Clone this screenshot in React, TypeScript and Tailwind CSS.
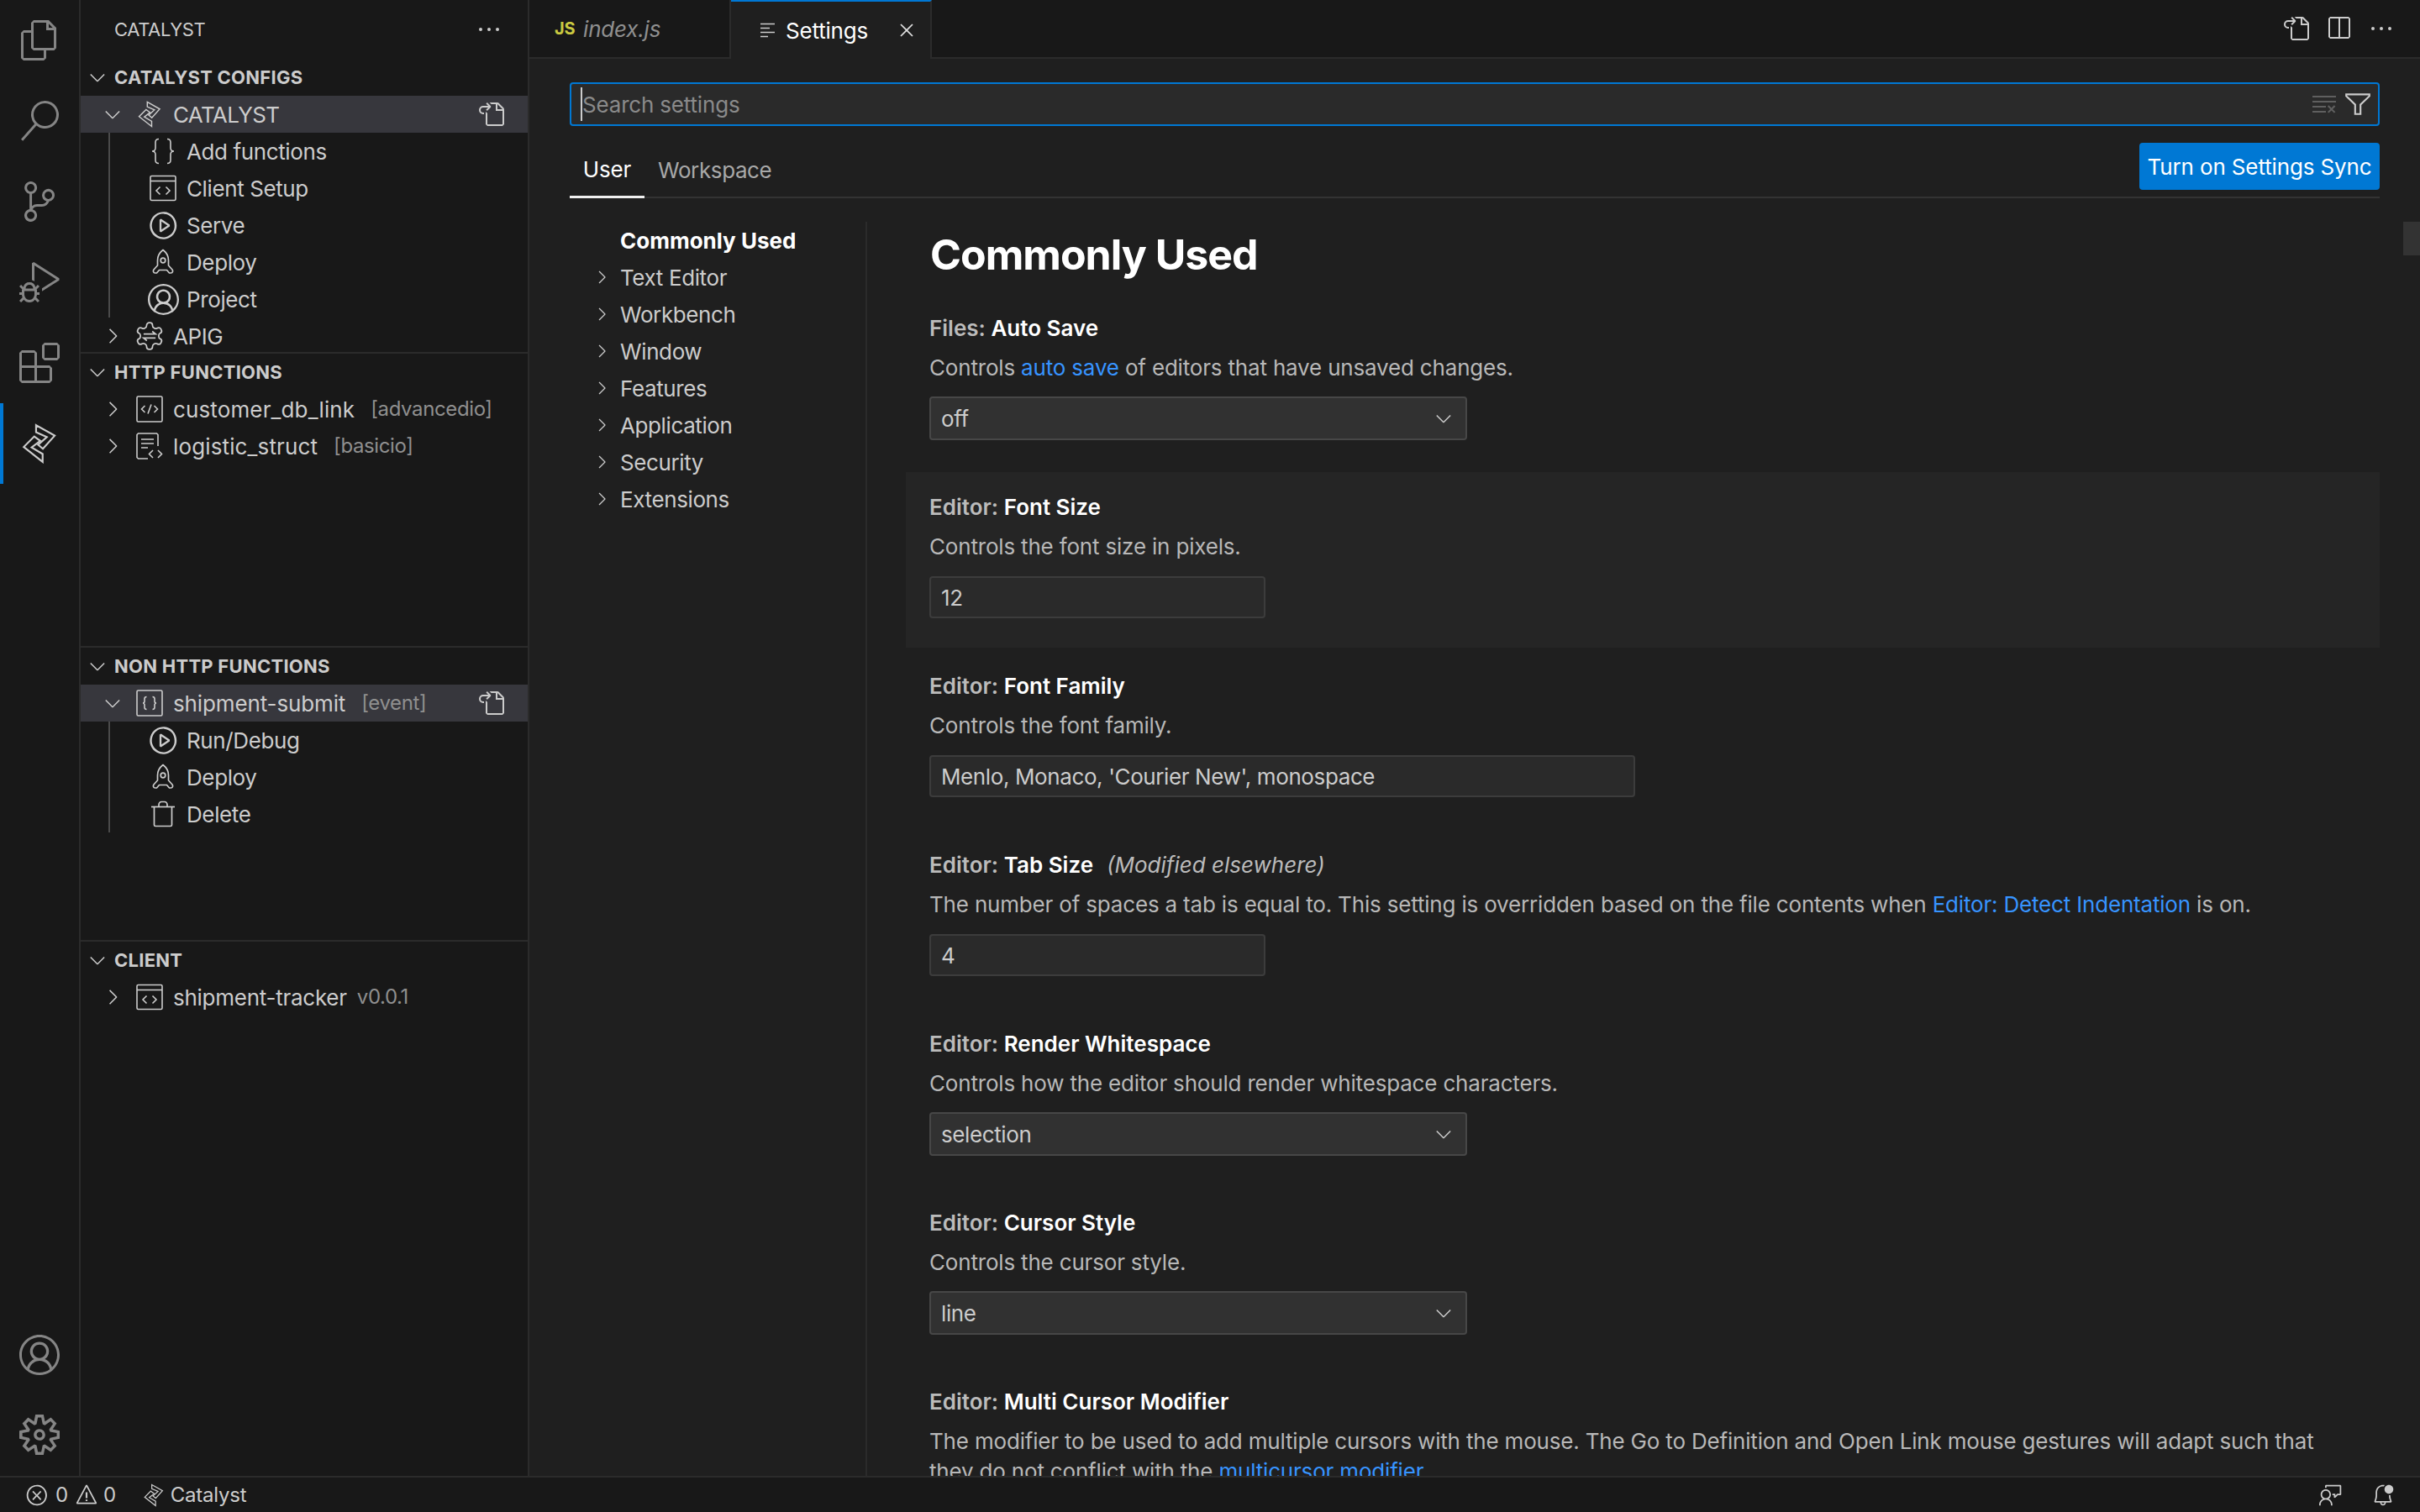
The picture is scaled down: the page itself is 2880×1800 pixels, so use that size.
import type { ReactNode } from 'react';
import {
  VscAccount,
  VscBellDot,
  VscChevronDown,
  VscChevronRight,
  VscClearAll,
  VscClose,
  VscDebugAlt,
  VscEllipsis,
  VscError,
  VscExtensions,
  VscFeedback,
  VscFiles,
  VscFilter,
  VscGoToFile,
  VscPlayCircle,
  VscSearch,
  VscSettingsGear,
  VscSourceControl,
  VscSplitHorizontal,
  VscWarning,
} from 'react-icons/vsc';

function CatalystLogo({ className }: { className?: string }) {
  return (
    <svg viewBox="18 38 134 154" fill="none" stroke="currentColor" strokeWidth="7" strokeLinejoin="miter" className={className}>
      <path d="M72 45 L143 85 L98 135 L80 120 L113 90 L72 72 Z" />
      <path d="M97 185 L25 128 L65 88 L88 105 L55 130 L97 155 Z" />
    </svg>
  );
}

function Braces({ className }: { className?: string }) {
  return (
    <svg viewBox="0 0 32 32" fill="none" stroke="currentColor" strokeWidth="1.6" className={className}>
      <path d="M11 1.500c-3 0-4 1.500-4 4v6.500c0 2-1 4-4 4 3 0 4 2 4 4v6.500c0 2.500 1 4 4 4M21 1.500c3 0 4 1.500 4 4v6.500c0 2 1 4 4 4-3 0-4 2-4 4v6.500c0 2.500-1 4-4 4" />
    </svg>
  );
}

function Rocket({ className }: { className?: string }) {
  return (
    <svg viewBox="0 0 32 32" fill="none" stroke="currentColor" strokeWidth="1.7" strokeLinejoin="round" className={className}>
      <path d="M16 1.500c4.500 3.500 6.500 7.500 6.500 12.500v6l4.500 5c1.200 1.500.5 4-1.500 4h-2l-3-3.500h-9L8.500 29h-2c-2 0-2.700-2.500-1.500-4l4.500-5v-6c0-5 2-9 6.500-12.500z" />
      <circle cx="16" cy="14" r="2.800" />
    </svg>
  );
}

function Trash({ className }: { className?: string }) {
  return (
    <svg viewBox="0 0 32 32" fill="none" stroke="currentColor" strokeWidth="1.7" strokeLinejoin="round" className={className}>
      <path d="M2 7.500h28" />
      <path d="M5.500 7.500V29c0 1 .5 1.500 1.500 1.500h18c1 0 1.500-.5 1.500-1.500V7.500" />
      <path d="M11 7.500V5c0-2 1.500-3.500 3-3.500h4c1.500 0 3 1.500 3 3.500v2.500" />
    </svg>
  );
}

function TabSettingsIcon({ className }: { className?: string }) {
  return (
    <svg viewBox="0 0 18 18" fill="none" stroke="currentColor" strokeWidth="1.700" className={className}>
      <path d="M0 1.500h17M0 6.500h11M0 11.500h17M0 16.500h9" />
    </svg>
  );
}

function WindowCode({ className }: { className?: string }) {
  return (
    <svg viewBox="0 0 32 32" fill="none" stroke="currentColor" strokeWidth="1.6" className={className}>
      <rect x="1" y="1.500" width="30" height="29" rx="1.500" />
      <path d="M1 7.500h30" />
      <path d="M12.500 14.500 8 19l4.500 4.500M19.500 14.500 24 19l-4.500 4.500" />
    </svg>
  );
}

function SquareCode({ className }: { className?: string }) {
  return (
    <svg viewBox="0 0 32 32" fill="none" stroke="currentColor" strokeWidth="1.6" className={className}>
      <rect x="1" y="1" width="30" height="30" rx="1.500" />
      <path d="M10.500 12 6.500 16l4 4M21.500 12l4 4-4 4M18 10.500 14 21.500" />
    </svg>
  );
}

function SquareBraces({ className }: { className?: string }) {
  return (
    <svg viewBox="0 0 32 32" fill="none" stroke="currentColor" strokeWidth="1.6" className={className}>
      <rect x="1" y="1" width="30" height="30" rx="1.500" />
      <path d="M12.500 8.500c-2 0-2.500 1-2.500 2.500v2.500c0 1.500-.5 2.500-2 2.500 1.500 0 2 1 2 2.500V21c0 1.500.5 2.500 2.500 2.500M19.500 8.500c2 0 2.500 1 2.500 2.500v2.500c0 1.500.5 2.500 2 2.500-1.500 0-2 1-2 2.500V21c0 1.500-.5 2.500-2.500 2.500" />
    </svg>
  );
}

function DocCode({ className }: { className?: string }) {
  return (
    <svg viewBox="0 0 32 32" fill="none" stroke="currentColor" strokeWidth="1.6" className={className}>
      <path d="M14 31H2.500L1 29.500v-27L2.500 1h22L26 2.500V16" />
      <path d="M6 8h15M6 13h15M6 18h8" />
      <path d="M20 21l-4.500 4.500L20 30M26 21l4.500 4.500L26 30" />
    </svg>
  );
}

function GearArrows({ className }: { className?: string }) {
  return (
    <svg viewBox="0 0 24 24" fill="none" stroke="currentColor" strokeWidth="1.100" className={className}>
      <path d="M12.220 2h-.44a2 2 0 0 0-2 2v.18a2 2 0 0 1-1 1.730l-.43.25a2 2 0 0 1-2 0l-.15-.08a2 2 0 0 0-2.730.73l-.22.38a2 2 0 0 0 .73 2.730l.15.1a2 2 0 0 1 1 1.720v.51a2 2 0 0 1-1 1.740l-.15.09a2 2 0 0 0-.73 2.730l.22.38a2 2 0 0 0 2.730.73l.15-.08a2 2 0 0 1 2 0l.43.25a2 2 0 0 1 1 1.730V20a2 2 0 0 0 2 2h.44a2 2 0 0 0 2-2v-.18a2 2 0 0 1 1-1.730l.43-.25a2 2 0 0 1 2 0l.15.08a2 2 0 0 0 2.730-.73l.22-.39a2 2 0 0 0-.73-2.730l-.15-.08a2 2 0 0 1-1-1.740v-.5a2 2 0 0 1 1-1.740l.15-.09a2 2 0 0 0 .73-2.730l-.22-.38a2 2 0 0 0-2.730-.73l-.15.08a2 2 0 0 1-2 0l-.43-.25a2 2 0 0 1-1-1.730V4a2 2 0 0 0-2-2z" />
      <path d="M7.500 10.500h9l-2.500-2M16.500 13.500h-9l2.500 2" />
    </svg>
  );
}

function ActivityItem({ children, active }: { children: ReactNode; active?: boolean }) {
  return (
    <div className={`h-[96px] flex items-center justify-center ${active ? 'border-l-4 border-[#0078d4] text-[#cccccc] pr-[4px]' : ''}`}>
      {children}
    </div>
  );
}

function SectionHeader({ label }: { label: string }) {
  return (
    <div className="h-[44px] flex items-center pl-[6px] shrink-0">
      <VscChevronDown className="w-[28px] h-[28px]" />
      <span className="ml-[6px] text-[22px] font-bold tracking-[0.012em]">{label}</span>
    </div>
  );
}

interface TreeRowProps {
  open?: boolean;
  selected?: boolean;
  icon: ReactNode;
  label: string;
  labelClass?: string;
  hint?: string;
}

function TreeRow({ open, selected, icon, label, labelClass, hint }: TreeRowProps) {
  return (
    <div className={`h-[44px] flex items-center pl-[24px] pr-[28px] ${selected ? 'bg-[#37373d]' : ''}`}>
      {open ? <VscChevronDown className="w-[28px] h-[28px]" /> : <VscChevronRight className="w-[28px] h-[28px]" />}
      <span className="ml-[14px] w-[32px] h-[32px] flex items-center justify-center shrink-0">{icon}</span>
      <span className={`ml-[12px] whitespace-nowrap ${labelClass ?? ''}`}>{label}</span>
      {hint && <span className="ml-[19px] text-[24px] text-[#8f8f8f] whitespace-nowrap">{hint}</span>}
      {selected && <VscGoToFile className="ml-auto w-[32px] h-[32px] shrink-0" />}
    </div>
  );
}

function ChildRow({ icon, label }: { icon: ReactNode; label: string }) {
  return (
    <div className="h-[44px] flex items-center pl-[47px]">
      <span className="w-[32px] h-[32px] flex items-center justify-center shrink-0">{icon}</span>
      <span className="ml-[12px]">{label}</span>
    </div>
  );
}

function Sidebar() {
  return (
    <aside className="w-[534px] shrink-0 bg-[#181818] border-r-2 border-[#2b2b2b] flex flex-col text-[#cccccc] text-[26px] tracking-[-0.015em]">
      <div className="h-[70px] flex items-center justify-between pl-[40px] pr-[30px] shrink-0">
        <span className="text-[22px] font-normal">CATALYST</span>
        <VscEllipsis className="w-[32px] h-[32px]" />
      </div>

      <section className="h-[351px] border-b-2 border-[#2b2b2b] shrink-0">
        <SectionHeader label="CATALYST CONFIGS" />
        <TreeRow open selected icon={<CatalystLogo className="w-[28px] h-[32px]" />} label="CATALYST" labelClass="tracking-[-0.025em]" />
        <div className="ml-[33px] border-l-2 border-[#4a4a4a]">
          <ChildRow icon={<Braces className="w-[32px] h-[32px]" />} label="Add functions" />
          <ChildRow icon={<WindowCode className="w-[32px] h-[32px]" />} label="Client Setup" />
          <ChildRow icon={<VscPlayCircle className="w-[37px] h-[37px] shrink-0" />} label="Serve" />
          <ChildRow icon={<Rocket className="w-[32px] h-[32px]" />} label="Deploy" />
          <ChildRow icon={<VscAccount className="w-[37px] h-[37px] shrink-0" />} label="Project" />
        </div>
        <TreeRow icon={<GearArrows className="w-[38px] h-[38px] shrink-0" />} label="APIG" />
      </section>

      <section className="h-[350px] border-b-2 border-[#2b2b2b] shrink-0">
        <SectionHeader label="HTTP FUNCTIONS" />
        <TreeRow icon={<SquareCode className="w-[32px] h-[32px]" />} label="customer_db_link" labelClass="tracking-[0.005em]" hint="[advancedio]" />
        <TreeRow icon={<DocCode className="w-[32px] h-[32px]" />} label="logistic_struct" labelClass="tracking-[0.005em]" hint="[basicio]" />
      </section>

      <section className="h-[350px] border-b-2 border-[#2b2b2b] shrink-0">
        <SectionHeader label="NON HTTP FUNCTIONS" />
        <TreeRow open selected icon={<SquareBraces className="w-[32px] h-[32px]" />} label="shipment-submit" labelClass="tracking-[-0.005em]" hint="[event]" />
        <div className="ml-[33px] border-l-2 border-[#4a4a4a]">
          <ChildRow icon={<VscPlayCircle className="w-[37px] h-[37px] shrink-0" />} label="Run/Debug" />
          <ChildRow icon={<Rocket className="w-[32px] h-[32px]" />} label="Deploy" />
          <ChildRow icon={<Trash className="w-[32px] h-[32px]" />} label="Delete" />
        </div>
      </section>

      <section className="flex-1">
        <SectionHeader label="CLIENT" />
        <div className="h-[44px] flex items-center pl-[24px]">
          <VscChevronRight className="w-[28px] h-[28px]" />
          <span className="ml-[14px] w-[32px] h-[32px] flex items-center justify-center shrink-0">
            <WindowCode className="w-[32px] h-[32px]" />
          </span>
          <span className="ml-[12px] tracking-[-0.01em]">shipment-tracker</span>
          <span className="ml-[12px] text-[24px] text-[#8f8f8f]">v0.0.1</span>
        </div>
      </section>
    </aside>
  );
}

function SelectBox({ value }: { value: string }) {
  return (
    <div className="mt-[16px] w-[640px] h-[52px] flex items-center justify-between pl-[12px] pr-[12px] bg-[#313131] border-2 border-[#474747] rounded-[4px] text-[#cccccc] tracking-[-0.015em]">
      <span>{value}</span>
      <VscChevronDown className="w-[28px] h-[28px]" />
    </div>
  );
}

function InputBox({ value, width }: { value: string; width: string }) {
  return (
    <div className={`mt-[17px] h-[50px] flex items-center pl-[12px] bg-[#2a2a2a] border-2 border-[#3c3c3c] rounded-[4px] text-[#cccccc] tracking-[-0.015em] ${width}`}>
      {value}
    </div>
  );
}

interface SettingRowProps {
  scope: string;
  name: string;
  note?: string;
  hover?: boolean;
  children: ReactNode;
}

function SettingRow({ scope, name, note, hover, children }: SettingRowProps) {
  return (
    <div className={`h-[209px] mb-[4px] px-[28px] pt-[24px] ${hover ? 'bg-[#252525]' : ''}`}>
      <div className="h-[36px] leading-[36px] font-semibold text-[#bbbbbb] whitespace-nowrap tracking-[0em]">
        {scope}: <span className="text-white">{name}</span>
        {note && <span className="ml-[16px] font-normal italic text-[#bbbbbb]">{note}</span>}
      </div>
      {children}
    </div>
  );
}

function Desc({ children }: { children: ReactNode }) {
  return <p className="mt-[11px] leading-[36px] text-[#b8b8b8] whitespace-nowrap">{children}</p>;
}

function A({ children }: { children: ReactNode }) {
  return <span className="text-[#3794ff]">{children}</span>;
}

const tocItems = ['Text Editor', 'Workbench', 'Window', 'Features', 'Application', 'Security', 'Extensions'];

function SettingsPane() {
  return (
    <main className="flex-1 min-w-0 bg-[#1f1f1f] flex flex-col overflow-hidden text-[26px] tracking-[-0.007em] relative">
      <div className="h-[70px] shrink-0 flex bg-[#181818] border-b-2 border-[#2b2b2b] items-start">
        <div className="w-[240px] h-[68px] flex items-center pl-[30px] border-r-2 border-[#2b2b2b]">
          <span className="w-[22px] text-[20px] font-bold text-[#cbcb41]">JS</span>
          <span className="ml-[12px] italic text-[#8f8f8f]">index.js</span>
        </div>
        <div className="w-[239px] h-[70px] flex items-center pl-[35px] bg-[#1f1f1f] border-t-2 border-t-[#0078d4] border-r-2 border-r-[#2b2b2b] text-white">
          <TabSettingsIcon className="w-[18px] h-[18px] text-[#cccccc]" />
          <span className="ml-[12px]">Settings</span>
          <VscClose className="ml-[32px] w-[28px] h-[28px] text-[#e0e0e0]" />
        </div>
        <div className="ml-auto h-[68px] flex items-center gap-[19px] pr-[30px] text-[#cccccc]">
          <VscGoToFile className="w-[32px] h-[32px]" />
          <VscSplitHorizontal className="w-[32px] h-[32px]" />
          <VscEllipsis className="w-[32px] h-[32px]" />
        </div>
      </div>

      <div className="flex-1 min-h-0 pl-[48px] pr-[48px] flex flex-col">
        <div className="mt-[28px] h-[52px] shrink-0 flex items-center pl-[11px] pr-[7px] bg-[#2a2a2a] border-2 border-[#0078d4] rounded-[4px]">
          <span className="w-[2px] h-[40px] bg-[#cccccc]" />
          <span className="text-[#8a8a8a]">Search settings</span>
          <VscClearAll className="ml-auto w-[32px] h-[32px] text-[#5f5f5f]" />
          <VscFilter className="ml-[7px] w-[34px] h-[34px] text-[#cccccc]" />
        </div>

        <div className="h-[86px] shrink-0 flex border-b-2 border-[#333333]">
          <div className="w-[89px] h-[86px] flex items-center justify-center border-b-[3px] border-[#f0f0f0] text-white pt-[20px]">
            User
          </div>
          <div className="ml-[16px] h-[84px] flex items-center text-[#a8a8a8] pt-[20px] tracking-[-0.015em]">Workspace</div>
          <div className="ml-auto mt-[20px] h-[56px] w-[286px] flex items-center justify-center bg-[#0078d4] rounded-[4px] text-white whitespace-nowrap tracking-[-0.005em]">
            Turn on Settings Sync
          </div>
        </div>

        <div className="flex-1 min-h-0 flex mt-[28px]">
          <nav className="w-[354px] shrink-0 border-r-2 border-[#2b2b2b] text-[#cccccc] tracking-[-0.015em]">
            <div className="h-[44px] flex items-center pl-[60px] font-bold text-white tracking-[0em]">Commonly Used</div>
            {tocItems.map((item) => (
              <div key={item} className="h-[44px] flex items-center pl-[26px]">
                <VscChevronRight className="w-[24px] h-[24px]" />
                <span className="ml-[10px]">{item}</span>
              </div>
            ))}
          </nav>

          <div className="flex-1 min-w-0 pl-[46px]">
            <h1 className="h-[78px] mb-[7px] pl-[29px] flex items-center text-[50px] font-bold text-white tracking-[-0.02em]">
              Commonly Used
            </h1>

            <SettingRow scope="Files" name="Auto Save">
              <Desc>
                Controls <A>auto save</A> of editors that have unsaved changes.
              </Desc>
              <SelectBox value="off" />
            </SettingRow>

            <SettingRow scope="Editor" name="Font Size" hover>
              <Desc>Controls the font size in pixels.</Desc>
              <InputBox value="12" width="w-[400px]" />
            </SettingRow>

            <SettingRow scope="Editor" name="Font Family">
              <Desc>Controls the font family.</Desc>
              <InputBox value="Menlo, Monaco, 'Courier New', monospace" width="w-[840px]" />
            </SettingRow>

            <SettingRow scope="Editor" name="Tab Size" note="(Modified elsewhere)">
              <Desc>
                The number of spaces a tab is equal to. This setting is overridden based on the file contents when{' '}
                <A>Editor: Detect Indentation</A> is on.
              </Desc>
              <InputBox value="4" width="w-[400px]" />
            </SettingRow>

            <SettingRow scope="Editor" name="Render Whitespace">
              <Desc>Controls how the editor should render whitespace characters.</Desc>
              <SelectBox value="selection" />
            </SettingRow>

            <SettingRow scope="Editor" name="Cursor Style">
              <Desc>Controls the cursor style.</Desc>
              <SelectBox value="line" />
            </SettingRow>

            <SettingRow scope="Editor" name="Multi Cursor Modifier">
              <Desc>
                The modifier to be used to add multiple cursors with the mouse. The Go to Definition and Open Link mouse gestures will adapt such that
                <br />
                they do not conflict with the <A>multicursor modifier</A>.
              </Desc>
            </SettingRow>
          </div>
        </div>
      </div>

      <div className="absolute right-0 top-[264px] w-[20px] h-[40px] bg-[#333333]" />
    </main>
  );
}

export default function App() {
  return (
    <div className="w-[2880px] h-[1800px] flex flex-col bg-[#181818] overflow-hidden font-['Inter',sans-serif]">
      <div className="flex-1 min-h-0 flex">
        <nav className="w-[96px] shrink-0 bg-[#181818] border-r-2 border-[#2b2b2b] flex flex-col text-[#858585]">
          <ActivityItem><VscFiles className="w-[48px] h-[48px]" /></ActivityItem>
          <ActivityItem><VscSearch className="w-[48px] h-[48px]" /></ActivityItem>
          <ActivityItem><VscSourceControl className="w-[48px] h-[48px]" /></ActivityItem>
          <ActivityItem><VscDebugAlt className="w-[48px] h-[48px]" /></ActivityItem>
          <ActivityItem><VscExtensions className="w-[48px] h-[48px]" /></ActivityItem>
          <ActivityItem active><CatalystLogo className="w-[42px] h-[48px]" /></ActivityItem>
          <div className="mt-auto h-[96px] flex items-center justify-center"><VscAccount className="w-[48px] h-[48px]" /></div>
          <div className="h-[96px] pb-[2px] flex items-center justify-center"><VscSettingsGear className="w-[48px] h-[48px]" /></div>
        </nav>
        <Sidebar />
        <SettingsPane />
      </div>

      <footer className="h-[43px] shrink-0 flex items-center bg-[#181818] border-t-2 border-[#2b2b2b] text-[24px] text-[#cccccc] tracking-[-0.01em] pl-[30px] pr-[30px]">
        <VscError className="w-[28px] h-[28px]" />
        <span className="ml-[8px]">0</span>
        <VscWarning className="ml-[8px] w-[28px] h-[28px]" />
        <span className="ml-[6px]">0</span>
        <CatalystLogo className="ml-[33px] w-[24px] h-[28px]" />
        <span className="ml-[8px]">Catalyst</span>
        <VscFeedback className="ml-auto w-[28px] h-[28px]" />
        <VscBellDot className="ml-[34px] w-[28px] h-[28px]" />
      </footer>
    </div>
  );
}
